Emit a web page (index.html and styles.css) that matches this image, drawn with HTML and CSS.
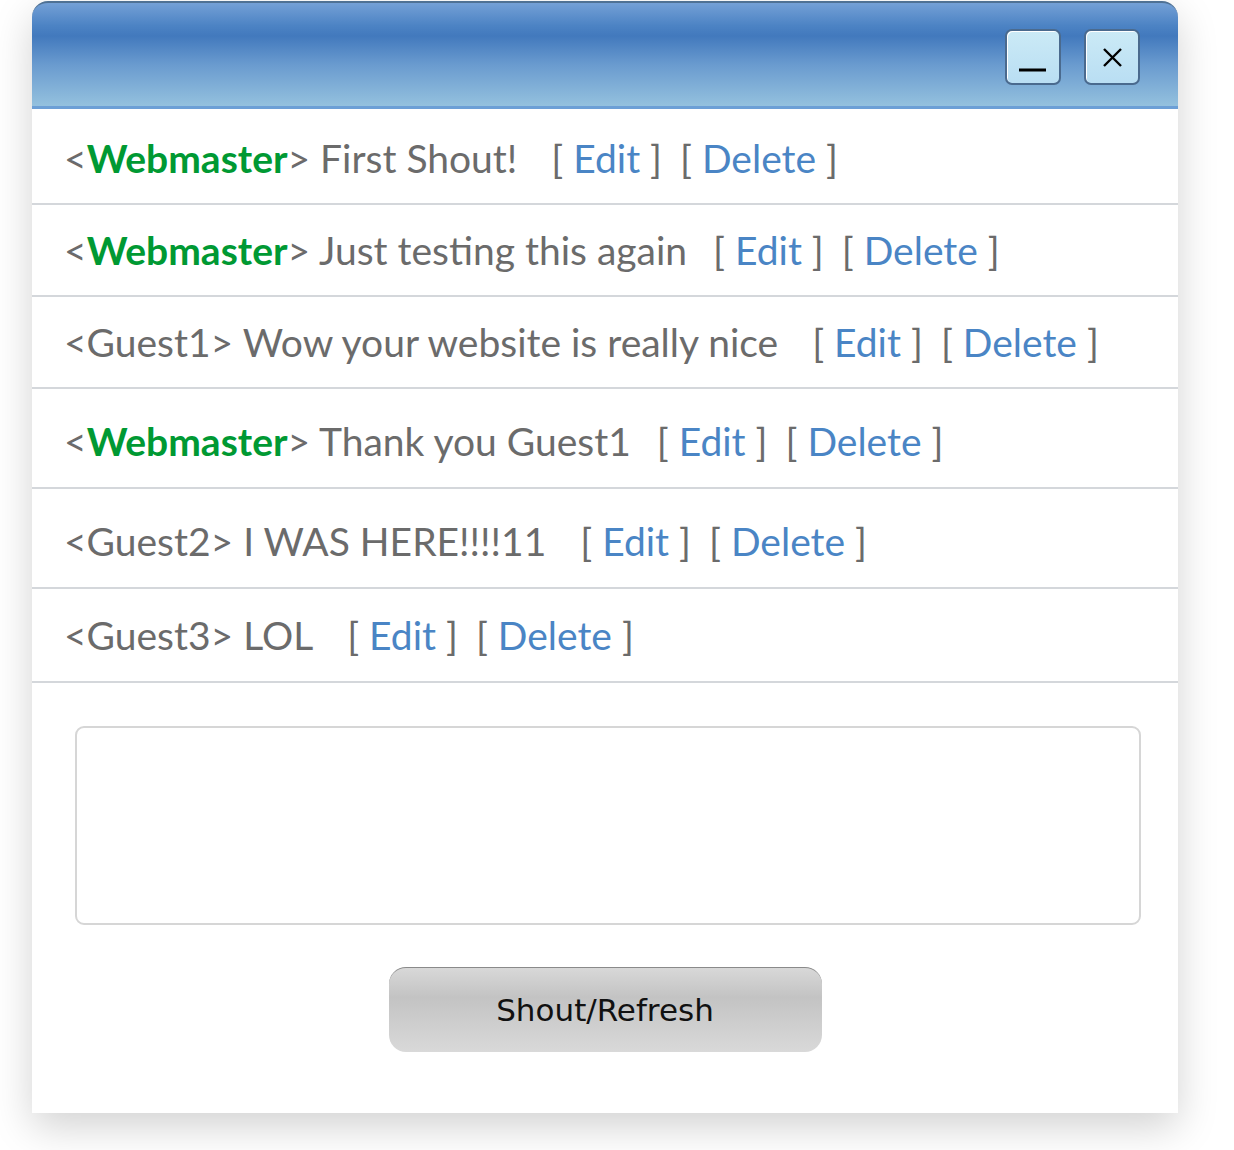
FILE: index.html
```html
<!DOCTYPE html>
<html lang="en">
<head>
    <meta charset="UTF-8">
    <title>Shoutbox</title>
    <link rel="stylesheet" href="styles.css">
</head>
<body>
    <div class="window">
        <div class="titlebar">
            <button class="winbtn" title="Minimize">
                <svg width="40" height="40" viewBox="0 0 40 40"><path d="M6 33 H33" stroke="#000" stroke-width="3"/></svg>
            </button>
            <button class="winbtn" title="Close">
                <svg width="40" height="40" viewBox="0 0 40 40"><path d="M12 12 L29 29 M29 12 L12 29" stroke="#000" stroke-width="2.4"/></svg>
            </button>
        </div>

        <div class="shouts">
            <div class="shout r1">&lt;<b class="admin">Webmaster</b>&gt; First Shout!<span class="acts wide">[ <a href="#">Edit</a> ]</span><span class="acts">[ <a href="#">Delete</a> ]</span></div>
            <div class="shout r2">&lt;<b class="admin">Webmaster</b>&gt; Just testing this again<span class="acts">[ <a href="#">Edit</a> ]</span><span class="acts">[ <a href="#">Delete</a> ]</span></div>
            <div class="shout r2">&lt;Guest1&gt; Wow your website is really nice<span class="acts wide">[ <a href="#">Edit</a> ]</span><span class="acts">[ <a href="#">Delete</a> ]</span></div>
            <div class="shout r4">&lt;<b class="admin">Webmaster</b>&gt; Thank you Guest1<span class="acts">[ <a href="#">Edit</a> ]</span><span class="acts">[ <a href="#">Delete</a> ]</span></div>
            <div class="shout r4">&lt;Guest2&gt; I WAS HERE!!!!11<span class="acts wide">[ <a href="#">Edit</a> ]</span><span class="acts">[ <a href="#">Delete</a> ]</span></div>
            <div class="shout r6">&lt;Guest3&gt; LOL<span class="acts wide">[ <a href="#">Edit</a> ]</span><span class="acts">[ <a href="#">Delete</a> ]</span></div>
        </div>

        <form class="shoutform" onsubmit="return false">
            <textarea class="msg"></textarea>
            <button class="submit" type="submit">Shout/Refresh</button>
        </form>
    </div>
</body>
</html>
```

FILE: styles.css
```css
html, body {
    min-height: 1150px;
}
body {
    margin: 0;
    padding: 1px 0 0 32px;
    background: #fff;
    font-family: Lato, "Noto Sans", sans-serif;
}
.window {
    width: 1146px;
    height: 1112px;
    background: #fff;
    border-radius: 16px 16px 0 0;
    box-shadow: 0 14px 40px rgba(0,0,0,0.18);
}
.titlebar {
    height: 108px;
    box-sizing: border-box;
    border-top: 2px solid #4f7194;
    border-bottom: 3px solid #6c9fd6;
    border-radius: 16px 16px 0 0;
    background: linear-gradient(#74a0d6 0%, #4c83c4 22%, #4279bd 32%, #6a9bcf 60%, #94c1de 100%);
    display: flex;
    justify-content: flex-end;
    align-items: flex-start;
    gap: 23px;
    padding: 26px 38px 0 0;
}
.winbtn {
    width: 56px;
    height: 56px;
    padding: 0;
    border: 2px solid #4a6a8e;
    border-radius: 7px;
    background: linear-gradient(#cbeaf6, #b9def3);
    box-shadow: inset 1px 1px 0 #fff;
    display: flex;
    align-items: center;
    justify-content: center;
    cursor: pointer;
}
.shout {
    padding: 0 0 0 32px;
    font-size: 39px;
    color: #6b6b6b;
    border-bottom: 2px solid #d4d7db;
    white-space: nowrap;
    height: 94px;
    line-height: 98px;
}
.shout.r2 { height: 90px; line-height: 90px; }
.shout.r4 { height: 98px; line-height: 104px; }
.shout.r6 { height: 92px; line-height: 92px; }
.admin { color: #009933; }
.acts { margin-left: 26px; }
.acts.wide { margin-left: 34px; }
.acts + .acts { margin-left: 18px; }
.acts a {
    color: #4a85c5;
    text-decoration: none;
}
.shoutform {
    display: flex;
    flex-direction: column;
    align-items: center;
    padding: 43px 0 0 0;
}
.msg {
    align-self: flex-start;
    width: 1066px;
    height: 199px;
    box-sizing: border-box;
    border: 2px solid #d6d6d6;
    border-radius: 9px;
    resize: none;
    margin: 0 0 42px 43px;
}
.submit {
    width: 433px;
    height: 85px;
    border: none;
    border-top: 1px solid #8a8a8a;
    border-radius: 17px;
    background: linear-gradient(#d8d8d8, #c3c3c3 35%, #cfcfcf 70%, #d9d9d9);
    font-family: "DejaVu Sans", Verdana, sans-serif;
    font-size: 31px;
    color: #111;
    cursor: pointer;
}
```
